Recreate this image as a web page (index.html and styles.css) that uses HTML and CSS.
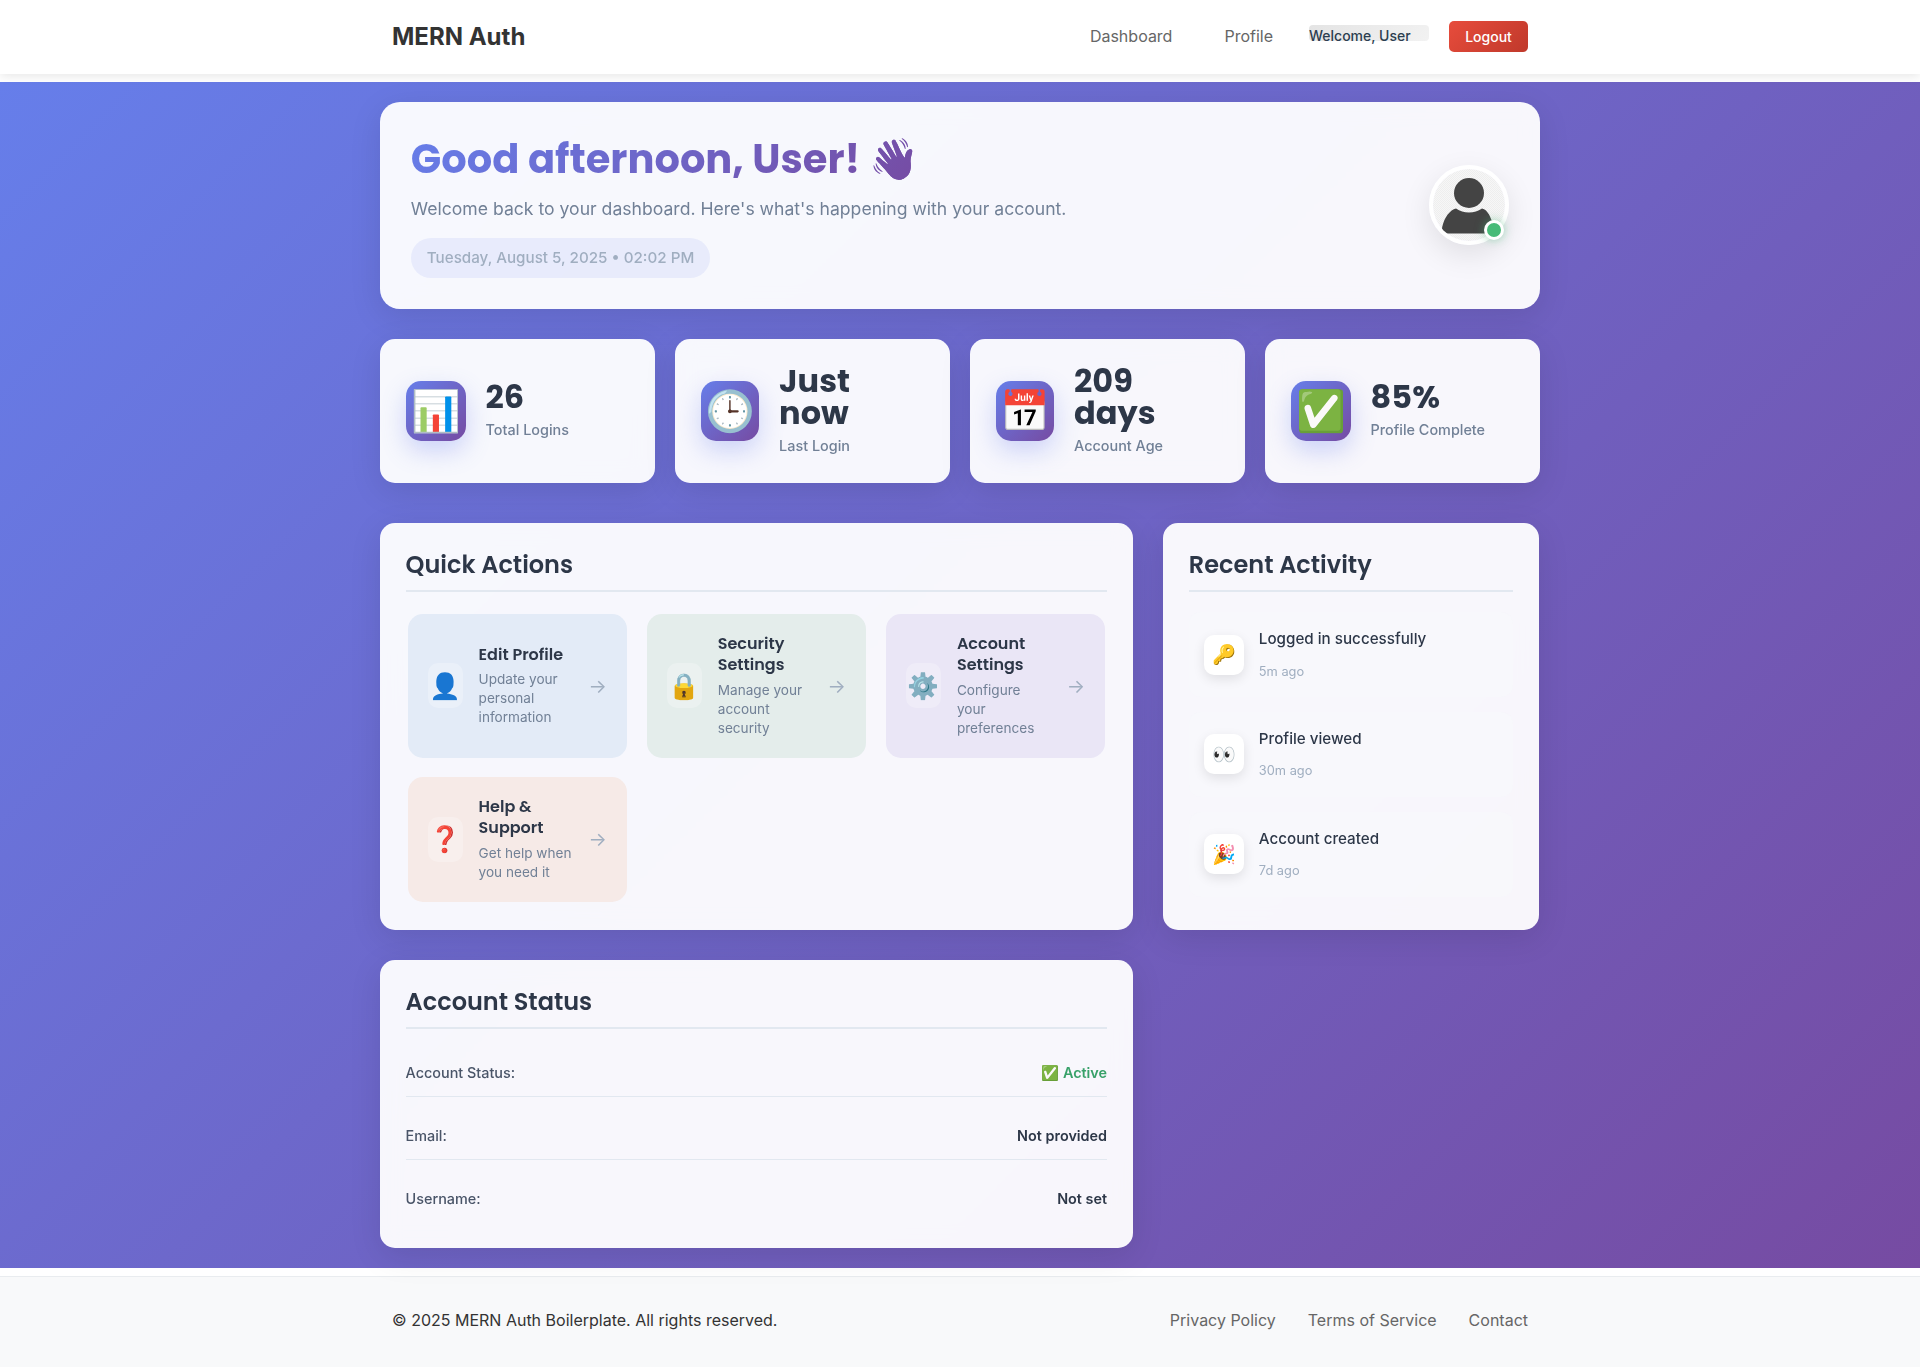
FILE: index.html
```html
<!DOCTYPE html>
<html lang="en">
<head>
<meta charset="utf-8">
<title>MERN Auth</title>
<link rel="stylesheet" href="styles.css">
</head>
<body>
<header class="navbar">
  <div class="nav-inner">
    <a class="brand">MERN Auth</a>
    <nav class="nav-menu">
      <a class="nav-link">Dashboard</a>
      <a class="nav-link">Profile</a>
      <span class="nav-welcome">Welcome, User</span>
      <button class="nav-logout">Logout</button>
    </nav>
  </div>
</header>
<main class="main">
  <div class="container">
    <section class="card hero">
      <div class="hero-text">
        <h1 class="hero-title">Good afternoon, User! 👋</h1>
        <p class="hero-sub">Welcome back to your dashboard. Here's what's happening with your account.</p>
        <span class="hero-date">Tuesday, August 5, 2025 • 02:02 PM</span>
      </div>
      <div class="avatar">
        <svg class="avatar-img" viewBox="0 0 72 72" aria-hidden="true">
          <defs>
            <pattern id="dots" width="2" height="2" patternUnits="userSpaceOnUse">
              <rect width="2" height="2" fill="#f7f7f7"/>
              <rect width="1" height="1" fill="#eeeeee"/>
              <rect x="1" y="1" width="1" height="1" fill="#eeeeee"/>
            </pattern>
          </defs>
          <circle cx="36" cy="36" r="36" fill="url(#dots)"/>
          <circle cx="36" cy="24" r="15" fill="#444444"/>
          <path d="M23 39.500C27 42 31 43.500 36 43.500C41 43.500 45 42 49 39.500C55 41 58 48 60.500 58C61 62 59 64.500 56 64.500H14C10 64.500 8.500 62 9.200 58C11.500 48 17 41 23 39.500Z" fill="#444444"/>
        </svg>
        <span class="avatar-status"></span>
      </div>
    </section>

    <section class="stats">
      <div class="card stat">
        <div class="stat-icon">📊</div>
        <div class="stat-text"><div class="stat-value">26</div><div class="stat-label">Total Logins</div></div>
      </div>
      <div class="card stat">
        <div class="stat-icon stat-icon-narrow">🕒</div>
        <div class="stat-text"><div class="stat-value">Just<br>now</div><div class="stat-label">Last Login</div></div>
      </div>
      <div class="card stat">
        <div class="stat-icon stat-icon-narrow">📅</div>
        <div class="stat-text"><div class="stat-value">209<br>days</div><div class="stat-label">Account Age</div></div>
      </div>
      <div class="card stat">
        <div class="stat-icon">✅</div>
        <div class="stat-text"><div class="stat-value">85%</div><div class="stat-label">Profile Complete</div></div>
      </div>
    </section>

    <div class="dash-grid">
      <section class="card panel">
        <h2 class="panel-title">Quick Actions</h2>
        <div class="actions">
          <a class="action action-blue">
            <span class="action-icon">👤</span>
            <span class="action-text"><span class="action-title">Edit Profile</span><span class="action-desc">Update your personal information</span></span>
            <span class="action-arrow">→</span>
          </a>
          <a class="action action-green">
            <span class="action-icon">🔒</span>
            <span class="action-text"><span class="action-title">Security Settings</span><span class="action-desc">Manage your account security</span></span>
            <span class="action-arrow">→</span>
          </a>
          <a class="action action-purple">
            <span class="action-icon">⚙️</span>
            <span class="action-text"><span class="action-title">Account Settings</span><span class="action-desc">Configure your preferences</span></span>
            <span class="action-arrow">→</span>
          </a>
          <a class="action action-red">
            <span class="action-icon">❓</span>
            <span class="action-text"><span class="action-title">Help &amp; Support</span><span class="action-desc">Get help when you need it</span></span>
            <span class="action-arrow">→</span>
          </a>
        </div>
      </section>

      <section class="card panel">
        <h2 class="panel-title">Recent Activity</h2>
        <div class="activity-list">
          <div class="activity">
            <div class="activity-icon">🔑</div>
            <div><div class="activity-title">Logged in successfully</div><div class="activity-time">5m ago</div></div>
          </div>
          <div class="activity">
            <div class="activity-icon">👀</div>
            <div><div class="activity-title">Profile viewed</div><div class="activity-time">30m ago</div></div>
          </div>
          <div class="activity">
            <div class="activity-icon">🎉</div>
            <div><div class="activity-title">Account created</div><div class="activity-time">7d ago</div></div>
          </div>
        </div>
      </section>

      <section class="card panel">
        <h2 class="panel-title">Account Status</h2>
        <div class="status-list">
          <div class="status-row"><span class="status-label">Account Status:</span><span class="status-value status-active">✅ Active</span></div>
          <div class="status-row"><span class="status-label">Email:</span><span class="status-value">Not provided</span></div>
          <div class="status-row"><span class="status-label">Username:</span><span class="status-value">Not set</span></div>
        </div>
      </section>
    </div>
  </div>
</main>
<footer class="footer">
  <div class="footer-inner">
    <p class="footer-copy">© 2025 MERN Auth Boilerplate. All rights reserved.</p>
    <div class="footer-links">
      <a class="footer-link">Privacy Policy</a>
      <a class="footer-link">Terms of Service</a>
      <a class="footer-link">Contact</a>
    </div>
  </div>
</footer>
</body>
</html>
```
FILE: styles.css
```css
* { box-sizing: border-box; }
html, body { margin: 0; padding: 0; }
body {
  font-family: Inter, "Liberation Sans", sans-serif;
  font-size: 16px;
  line-height: 1.6;
  color: #333;
  background: #fff;
  min-height: 1367px;
  display: flex;
  flex-direction: column;
}

.navbar { height: 74px; background: #fff; box-shadow: 0 2px 10px rgba(0, 0, 0, .1); position: relative; }
.nav-inner { width: 1160px; height: 100%; margin: 0 auto; padding: 0 12px; display: flex; align-items: center; justify-content: space-between; }
.brand { font-size: 24px; font-weight: 700; color: #333; }
.nav-menu { display: flex; align-items: center; gap: 20px; }
.nav-link { padding: 8px 16px; color: #666; }
.nav-welcome { width: 120px; height: 16px; margin-bottom: 8px; line-height: 22.400px; font-size: 14px; font-weight: 500; color: #2c3e50; border-radius: 4px; background: linear-gradient(135deg, #e4e4e4, #f2f2f2); white-space: nowrap; }
.nav-logout { height: 31px; width: 79px; margin-bottom: 1px; padding: 0; border: 0; border-radius: 5px; font: 500 14px Inter, sans-serif; color: #fff; background: linear-gradient(135deg, #e74c3c, #c0392b); }

.main { flex: 1; margin: 8px 0; padding: 20px 0; background: linear-gradient(135deg, #667eea 0%, #764ba2 100%); }
.container { width: 1160px; margin: 0 auto; }

.card { background: rgba(255, 255, 255, .95); border-radius: 20px; box-shadow: 0 8px 32px rgba(0, 0, 0, .1); -webkit-backdrop-filter: blur(10px); backdrop-filter: blur(10px); }

.hero { height: 207px; padding: 0 31px 0 30.800px; margin-bottom: 30px; display: flex; align-items: center; justify-content: space-between; }
.hero-text { display: flex; flex-direction: column; align-items: flex-start; }
.hero-title { margin: 0 0 8.600px; font-family: Poppins, Inter, sans-serif; font-size: 40px; font-weight: 700; line-height: 53px; background: linear-gradient(135deg, #667eea, #764ba2); -webkit-background-clip: text; background-clip: text; -webkit-text-fill-color: transparent; }
.hero-sub { margin: 0 0 14.600px; font-size: 17.600px; color: #718096; }
.hero-date { height: 40px; padding: 0 16px; display: flex; align-items: center; font-size: 15.200px; font-weight: 500; color: #a0aec0; background: rgba(102, 126, 234, .1); border-radius: 20px; }

.avatar { width: 80px; height: 80px; flex: none; margin-bottom: 1px; border: 4px solid #fff; border-radius: 50%; box-shadow: 0 10px 30px rgba(0, 0, 0, .1); position: relative; }
.avatar-img { width: 72px; height: 72px; display: block; border-radius: 50%; }
.avatar-status { width: 20px; height: 20px; border: 3px solid #fff; border-radius: 50%; background: #48bb78; box-shadow: 0 0 10px rgba(72, 187, 120, .5); position: absolute; right: 1px; bottom: 1px; }

.stats { display: grid; grid-template-columns: repeat(4, 1fr); gap: 20px; margin-bottom: 40px; }
.stat { height: 144px; padding: 25.600px; display: flex; align-items: center; gap: 20px; border-radius: 15px; }
.stat-icon { width: 60px; height: 60px; flex: none; display: flex; align-items: center; justify-content: center; font-size: 40px; line-height: 1; border-radius: 15px; background: linear-gradient(135deg, #667eea, #764ba2); box-shadow: 0 10px 25px rgba(102, 126, 234, .3); }
.stat-icon-narrow { width: 58.500px; }
.stat-value { margin-bottom: 5px; font-family: Poppins, Inter, sans-serif; font-size: 32px; font-weight: 700; line-height: 1; color: #2d3748; }
.stat-label { font-size: 14.400px; font-weight: 500; line-height: 23px; color: #718096; }

.dash-grid { display: grid; grid-template-columns: 752.670px 1fr; gap: 30px 30.600px; margin-right: 1px; }
.panel { padding: 25.600px; border-radius: 15px; }
.panel-title { margin: 0 0 20px; padding-bottom: 9.600px; border-bottom: 2px solid #e2e8f0; font-family: Poppins, Inter, sans-serif; font-size: 24px; font-weight: 600; line-height: 32px; color: #2d3748; }

.actions { display: grid; grid-template-columns: repeat(3, 1fr); gap: 19.400px 20px; padding: 2px 2px 2.600px; }
.action { padding: 20px; display: flex; align-items: center; gap: 16px; border-radius: 15px; }
.action-blue { background: #e3ebf7; }
.action-green { background: #e4edeb; }
.action-purple { background: #eae6f6; }
.action-red { background: #f6eae7; }
.action-icon { width: 35px; height: 45px; flex: none; display: flex; align-items: center; justify-content: center; font-size: 25.600px; border-radius: 10px; background: rgba(255, 255, 255, .25); }
.action-text { flex: 1; display: block; }
.action-title { display: block; margin-bottom: 5px; font-family: Poppins, Inter, sans-serif; font-size: 16px; font-weight: 600; line-height: 20.800px; color: #2d3748; }
.action-desc { display: block; font-size: 13.600px; line-height: 19px; color: #718096; }
.action-arrow { font-size: 19.200px; color: #a0aec0; }

.activity-list { display: flex; flex-direction: column; gap: 15px; }
.activity { padding: 15px; display: flex; align-items: center; gap: 15px; border-radius: 12px; background: rgba(248, 250, 252, .5); }
.activity-icon { width: 40px; height: 40px; flex: none; display: flex; align-items: center; justify-content: center; font-size: 19.200px; border-radius: 10px; background: #fff; box-shadow: 0 4px 12px rgba(0, 0, 0, .1); }
.activity-title { margin-bottom: 10px; font-size: 15.200px; font-weight: 500; color: #2d3748; }
.activity-time { font-size: 12.800px; color: #a0aec0; }

.status-row { padding: 12px 0; margin-bottom: 15px; display: flex; justify-content: space-between; font-size: 14.400px; border-bottom: 1px solid #e2e8f0; }
.status-row:last-child { margin-bottom: 0; border-bottom: 0; }
.status-label { font-weight: 500; color: #4a5568; }
.status-value { font-weight: 600; color: #2d3748; }
.status-active { color: #38a169; }

.footer { height: 91px; background: #f8f9fa; border-top: 1px solid #e9ecef; }
.footer-inner { width: 1160px; height: 100%; margin: 0 auto; padding: 0 12px 2px; display: flex; align-items: center; justify-content: space-between; }
.footer-copy { margin: 0; color: #333; }
.footer-links { display: flex; gap: 32px; }
.footer-link { color: #666; }
```
